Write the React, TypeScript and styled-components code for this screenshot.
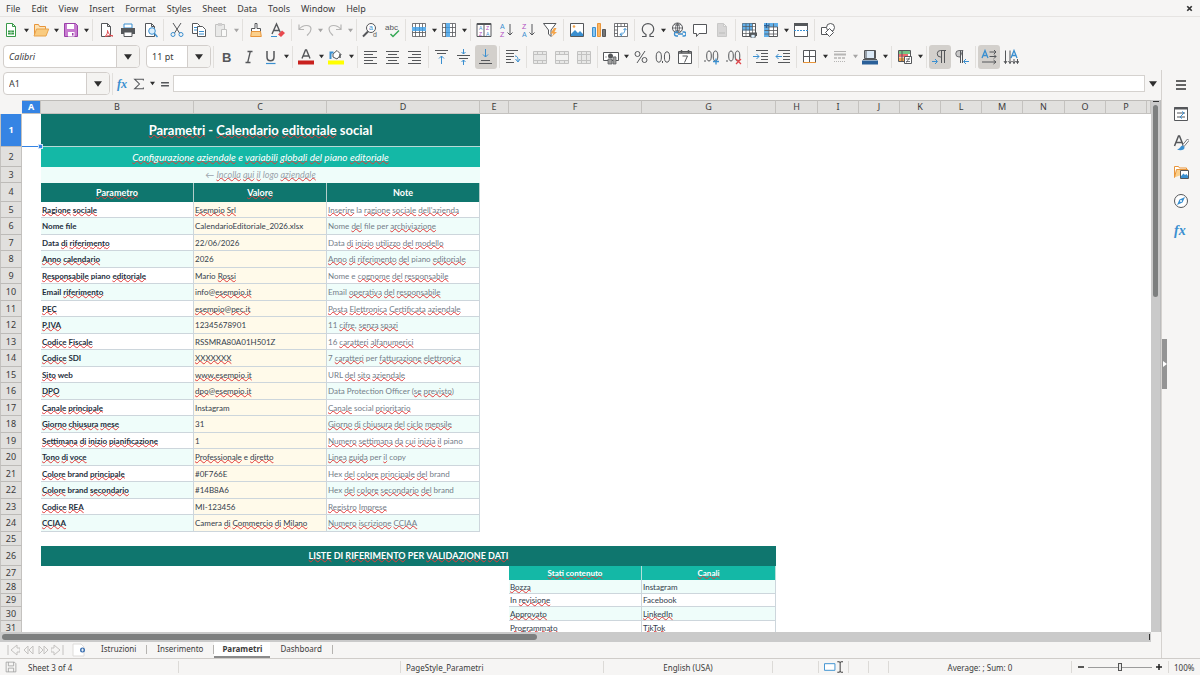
import React from "react";
import styled, { createGlobalStyle, css } from "styled-components";

const c = {
  chrome: "#f6f5f4",
  line: "#dcd9d6",
  text: "#3b3b3b",
  ink: "#55575a",
  blue: "#3a8fd0",
  teal: "#0f766e",
  tealLight: "#14b8a6",
  mint: "#effdfa",
  cream: "#fffaea",
  select: "#3584e4",
};

const uiFont = '"Noto Sans", sans-serif';
const cellFont = 'Lato, "Liberation Sans", sans-serif';

const GlobalStyle = createGlobalStyle`
  * { box-sizing: border-box; }
  html, body { margin: 0; padding: 0; }
  body { background: ${c.chrome}; font-family: ${uiFont}; font-size: 9px; color: ${c.text}; overflow: hidden; }
  button, input { font: inherit; color: inherit; margin: 0; padding: 0; border: 0; background: none; border-radius: 0; outline: none; }
`;

/* ---------- shell ---------- */

const Shell = styled.div`
  display: flex;
  flex-direction: column;
  height: 100vh;
`;

const MenuBar = styled.nav`
  display: flex;
  align-items: center;
  height: 17px;
  padding-left: 1px;
  border-bottom: 1px solid #e6e4e2;
`;

const MenuItem = styled.button`
  padding: 1px 6px 0 5px;
  line-height: 16px;
`;

const CloseButton = styled.button`
  margin-left: auto;
  width: 22px;
  height: 16px;
  display: flex;
  align-items: center;
  justify-content: center;
`;

const Toolbar = styled.div<{ $height: number }>`
  display: flex;
  align-items: center;
  height: ${(p) => p.$height}px;
`;

const Combos = styled.div`
  display: flex;
  gap: 3px;
`;

const ToolButton = styled.button<{ $on?: boolean; $off?: boolean; $slim?: boolean }>`
  display: flex;
  align-items: center;
  justify-content: center;
  flex: none;
  width: ${(p) => (p.$slim ? 16 : 22)}px;
  height: 24px;
  border-radius: 3px;
  ${(p) => p.$on && css`background: #d3d0cc;`}
  ${(p) => p.$off && css`opacity: 0.4; filter: grayscale(1);`}
`;

const CaretButton = styled(ToolButton)<{ $wide?: boolean }>`
  width: ${(p) => (p.$wide ? 10 : 8)}px;
`;

const Separator = styled.span`
  flex: none;
  width: 1px;
  height: 22px;
  margin: 0 2px;
  background: #e2e0dd;
`;

const Combo = styled.div<{ $width: number }>`
  display: flex;
  flex: none;
  width: ${(p) => p.$width}px;
  height: 23px;
  margin-left: 3px;
  border: 1px solid #d2cecb;
  border-radius: 4px;
  background: #fff;
  overflow: hidden;
`;

const ComboInput = styled.input<{ $italic?: boolean }>`
  flex: 1;
  min-width: 0;
  padding-left: 5px;
  font-style: ${(p) => (p.$italic ? "italic" : "normal")};
`;

const ComboArrow = styled.button`
  display: flex;
  align-items: center;
  justify-content: center;
  width: 23px;
  border-left: 1px solid #d2cecb;
  background: #f4f3f1;
`;

const Work = styled.div`
  display: flex;
  flex: 1;
  min-height: 0;
`;

const Main = styled.main`
  display: flex;
  flex-direction: column;
  flex: 1;
  min-width: 0;
`;

const FormulaBar = styled.div`
  display: flex;
  align-items: center;
  height: 27px;
  margin-bottom: 3px;
`;

const FormulaInput = styled.input`
  flex: 1;
  min-width: 0;
  height: 17px;
  background: #fff;
  border: 1px solid #d5d2cf;
`;

/* ---------- sheet ---------- */

const SheetRow = styled.div`
  display: flex;
  flex: 1;
  min-height: 0;
`;

const SheetView = styled.div`
  flex: 1;
  min-width: 0;
  overflow: hidden;
  background: #fff;
`;

const Grid = styled.table`
  width: 100%;
  table-layout: fixed;
  border-collapse: separate;
  border-spacing: 0;
`;

const ColHead = styled.th<{ $on?: boolean }>`
  height: 14px;
  padding: 0;
  line-height: 12px;
  font-weight: ${(p) => (p.$on ? 700 : 400)};
  color: ${(p) => (p.$on ? "#fff" : c.text)};
  background: ${(p) => (p.$on ? c.select : "#e1e0de")};
  border-top: 1px solid #bdbbb8;
  border-right: 1px solid #c4c2bf;
  border-bottom: 1px solid #c4c2bf;
`;

const Corner = styled.td`
  padding: 0;
  background: ${c.chrome};
`;

const RowHead = styled.th<{ $h: number; $on?: boolean }>`
  height: ${(p) => p.$h}px;
  padding: 0;
  line-height: 12px;
  font-weight: ${(p) => (p.$on ? 700 : 400)};
  color: ${(p) => (p.$on ? "#fff" : c.text)};
  background: ${(p) => (p.$on ? c.select : "#e1e0de")};
  border-left: 1px solid #c4c2bf;
  border-right: 1px solid #c4c2bf;
  border-bottom: 1px solid #bdbbb8;
`;

type Look =
  | "title" | "subtitle" | "hint" | "head" | "name" | "value"
  | "note" | "section" | "listHead" | "list";

const looks = {
  title: css`
    font-size: 13px; font-weight: 700; color: #fff; text-align: center;
    background: ${c.teal}; border-bottom: 1px solid #b9d9d6;
  `,
  subtitle: css`
    font-size: 10px; font-style: italic; color: #fff; text-align: center;
    background: ${c.tealLight};
  `,
  hint: css`
    font-size: 9px; font-style: italic; color: #9aa3ab; text-align: center;
    background: ${c.mint};
  `,
  head: css`
    font-size: 9px; font-weight: 700; color: #fff; text-align: center;
    background: ${c.teal}; border-right: 1px solid #b4cdca;
  `,
  name: css`font-weight: 700; color: #1f2f3d;`,
  value: css`color: #33404c;`,
  note: css`color: #747d89;`,
  section: css`
    font-size: 9px; font-weight: 700; color: #fff; text-align: center;
    background: ${c.teal};
  `,
  listHead: css`
    font-size: 8px; font-weight: 700; color: #fff; text-align: center;
    background: ${c.tealLight}; border-right: 1px solid #b4e0da;
  `,
  list: css`color: #33404c;`,
};

const Cell = styled.td<{ $look: Look; $fill?: string }>`
  padding: 0 1px;
  font-family: ${cellFont};
  font-size: 8px;
  line-height: 12px;
  white-space: nowrap;
  background: ${(p) => p.$fill || "transparent"};
  ${(p) =>
    ["name", "value", "note", "list"].includes(p.$look) &&
    css`
      border-right: 1px solid #cdd6dc;
      border-bottom: 1px solid #cdd6dc;
    `}
  ${(p) => looks[p.$look]}
`;

const ActiveCell = styled.td`
  position: relative;
  padding: 0;
  border-bottom: 1px solid ${c.select};
`;

const FillHandle = styled.span`
  position: absolute;
  right: -2px;
  bottom: -3px;
  z-index: 1;
  width: 5px;
  height: 5px;
  background: ${c.select};
  border: 1px solid #cfe2f8;
`;

const Misspelt = styled.span`
  text-decoration: underline wavy #e23b3b 1px;
  text-decoration-skip-ink: none;
  text-underline-offset: -1px;
`;

/* ---------- scroll bars ---------- */

const VScroll = styled.div`
  display: flex;
  flex-direction: column;
  align-items: center;
  width: 10px;
  background: #cacaca;
  border-right: 1px solid #bcbcbc;
`;

const VMark = styled.span`
  width: 6px;
  height: 1px;
  margin: 1px 0 3px;
  background: #333;
`;

const VThumb = styled.span`
  width: 5px;
  height: 36%;
  border-radius: 3px;
  background: #7d7f7f;
`;

const HScroll = styled.div`
  display: flex;
  align-items: center;
  justify-content: space-between;
  height: 10px;
  margin-right: 10px;
  padding: 0 1px 0 2px;
  background: #cacaca;
`;

const HThumb = styled.span`
  width: calc(47% - 5px);
  height: 6px;
  border-radius: 3px;
  background: #7d7f7f;
`;

const HMark = styled.span`
  width: 1px;
  height: 6px;
  background: #333;
`;

/* ---------- sheet tabs ---------- */

const Tabs = styled.div`
  display: flex;
  align-items: stretch;
  height: 16px;
  padding-left: 5px;
  font-size: 8px;
`;

const TabNav = styled.button`
  width: 15px;
  display: flex;
  align-items: center;
  justify-content: center;
`;

const AddTab = styled.button`
  display: flex;
  align-items: center;
  justify-content: center;
  width: 18px;
  margin: 0 3px 0 5px;
`;

const Tab = styled.button<{ $on?: boolean }>`
  padding: 0 ${(p) => (p.$on ? 8 : 10)}px;
  line-height: 14px;
  font-weight: ${(p) => (p.$on ? 700 : 400)};
  background: ${(p) => (p.$on ? "#fff" : "transparent")};
  border-bottom: 2px solid ${(p) => (p.$on ? "#8b8b8b" : "transparent")};
`;

const TabRule = styled.span`
  width: 1px;
  height: 9px;
  margin-top: 3px;
  background: #b5b3b0;
`;

/* ---------- side bar ---------- */

const Side = styled.aside`
  display: flex;
  flex: none;
  width: 39px;
  border-left: 1px solid #d5d2cf;
`;

const SideHandle = styled.button`
  align-self: center;
  display: flex;
  align-items: center;
  justify-content: center;
  width: 5px;
  height: 50px;
  background: #949494;
`;

const SideIcons = styled.div`
  display: flex;
  flex: 1;
  flex-direction: column;
  align-items: center;
  padding-right: 5px;
`;

const SideButton = styled.button`
  display: flex;
  align-items: center;
  justify-content: center;
  width: 24px;
  height: 29px;
`;

/* ---------- status bar ---------- */

const Status = styled.footer`
  display: grid;
  grid-template-columns: 23px 156fr 222fr 203fr 169fr 46px 30px 20px 20px 183fr 97px 31px;
  height: 17px;
  border-top: 1px solid #cfccc9;
  font-size: 8px;
`;

const StatusCell = styled.div<{ $align?: string; $rule?: boolean }>`
  display: flex;
  align-items: center;
  justify-content: ${(p) => p.$align || "flex-start"};
  gap: 3px;
  height: 12px;
  margin-top: 2px;
  padding: 0 5px;
  white-space: nowrap;
  border-right: 1px solid ${(p) => (p.$rule ? "#dcdad7" : "transparent")};
`;

const ZoomSlider = styled.input`
  appearance: none;
  flex: 1;
  min-width: 0;
  height: 12px;
  background: linear-gradient(#9c9c9c, #9c9c9c) center / 100% 1px no-repeat;
  &::-webkit-slider-thumb {
    appearance: none;
    width: 4px;
    height: 8px;
    border: 1px solid #555;
    background: #e8e8e8;
  }
`;

const StepButton = styled.button`
  width: 8px;
  height: 12px;
  display: flex;
  align-items: center;
  justify-content: center;
`;

/* ---------- icons ---------- */

const S = c.ink;
const B = c.blue;
const page = "M3.5 1.5h6l3 3v10h-9z M9.5 1.5v3h3";
const lines = (rows: [number, number, number][]) =>
  rows.map(([y, a, b]) => <path key={y} d={`M${a} ${y}.5H${b}`} stroke={S} />);
const svgFont = { fontFamily: '"Noto Sans", sans-serif' };
const smallFont = { fontFamily: '"Liberation Sans", sans-serif' };
const purple = "#b04bc0";
const mergeBase = (
  <>
    <path d="M1.5 2.5h13v12h-13z" fill="#d5d5d5" stroke="#777" />
    <path d="M1.5 5.5h13M1.5 11.5h13M5.5 2.5v3M10.5 2.5v3M5.5 11.5v3M10.5 11.5v3" stroke="#777" />
  </>
);
const gridLines = "M1.5 1.5h13v13h-13z M1.5 5.5h13 M1.5 10.5h13 M4.5 1.5v13 M8.5 1.5v13 M11.5 1.5v13";

const art: Record<string, React.ReactNode> = {
  new: <><path d={page} fill="#fff" stroke="#3a9a4a" /><path d="M5 8.5h6v4H5z" fill="#3a9a4a" /><path d="M5 10.500h6M8 8.500v4" stroke="#c9ecd0" strokeWidth=".7" /></>,
  open: <><path d="M1.500 13V2.500h4l1 2h6v3" fill="#fde3b5" stroke="#e8953a" /><path d="M1 14 3.500 7h12.200L13 14z" fill="#f9cb80" stroke="#e8a34b" /></>,
  save: <><path d="M1.500 1.500h11l2 2v11h-13z" fill="#c77bd0" stroke="#9a3fa8" /><path d="M4 2h7v5H4z" fill="#fff" /><path d="M5 10h6.500v4.500H5z" fill="#fff" /><path d="M9 11h1.500v2.500H9z" fill="#9a3fa8" /></>,
  pdf: <><path d={page} fill="#fff" stroke={S} /><path d="M7 14.500c2-1 3-5 2.500-6 1 4 3 5 5.500 5.500-3-1-5.500 0-8 .5z" fill="none" stroke="#e0474c" /></>,
  print: <><path d="M4 2h8v4H4z" fill="#fff" stroke={B} /><path d="M1 6h14v6H1z" fill="#55585b" /><path d="M4 10h8v4.500H4z" fill="#fff" stroke={S} /></>,
  preview: <><path d={page} fill="#fff" stroke={S} /><circle cx="10" cy="9" r="3.300" fill="#dbeefc" stroke={B} /><path d="m12.500 11.500 3 3.500" stroke={B} strokeWidth="1.500" /></>,
  cut: <><path d="m4 1 6.500 10M12 1 5.500 11" stroke={S} fill="none" /><circle cx="4" cy="12.500" r="2" fill="none" stroke={B} /><circle cx="12" cy="12.500" r="2" fill="none" stroke={B} /></>,
  copy: <><path d="M1.500 1.500h5l2 2v8h-7z" fill="#fff" stroke={S} /><path d="M6.500 4.500h5l3 3v7h-8z" fill="#fff" stroke={S} /><path d="M8 9.500h5M8 12h5M3 5.500h3M3 8h3" stroke={B} /></>,
  paste: <><path d="M2.500 2.500h9v12h-9z" fill="#d8d8d8" stroke="#777" /><path d="M5 1h4v3H5z" fill="#999" /><path d="M8.500 7.500h5v7h-5z" fill="#fff" stroke="#777" /></>,
  clone: <><path d="M7 1.500h2v5h3.500v3h-9v-3H7z" fill="#fff" stroke={S} /><path d="M3.500 9.500h9l.8 5H2.700z" fill="#fbd08c" stroke="#e8953a" /></>,
  clear: <><path d="m2 12 4.500-10 3.800 8.500M3.600 8.500H9" fill="none" stroke={S} strokeWidth="1.400" /><path d="M1 14.500h6" stroke={B} /><path d="m8 12.500 4-4 3 2.500-4 4z" fill="#e8494e" /></>,
  undo: <path d="M2 2.500v5h5M2 7.500C6 2 14 2.500 14 7c0 3-2 4.500-4 6.500" fill="none" stroke={S} strokeWidth="1.200" />,
  redo: <path d="M14 2.500v5H9M14 7.500C10 2 2 2.500 2 7c0 3 2 4.500 4 6.500" fill="none" stroke={S} strokeWidth="1.200" />,
  find: <><circle cx="9" cy="6" r="4.500" fill="#fff" stroke={S} /><path d="M6 9.500 1 14.500" stroke={S} strokeWidth="2" /><text x="7" y="8" fontSize="7" fill={B} style={smallFont}>a</text><text x="11" y="15" fontSize="7" fill={S} style={smallFont}>d</text></>,
  spell: <><text x="1" y="8" fontSize="8" fill={S} style={smallFont}>abc</text><path d="m6.500 12 2.500 2.500 6-6" fill="none" stroke="#35a854" strokeWidth="1.500" /></>,
  row: <><path d={gridLines} fill="#fff" stroke={S} strokeWidth=".8" /><path d="M1 5h14v4H1z" fill="#62b0ea" /><path d="M4.500 5v4M8.500 5v4M11.500 5v4" stroke={B} strokeWidth=".8" /></>,
  col: <><path d={gridLines} fill="#fff" stroke={S} strokeWidth=".8" /><path d="M5 1h4v14H5z" fill="#62b0ea" /><path d="M5 5.500h4M5 10.500h4" stroke={B} strokeWidth=".8" /></>,
  sort: <><path d="M1 1.500h14v13H1z M8 1.500v13" fill="#fff" stroke={S} /><path d="M1 2h14" stroke={S} strokeWidth="2" /><text x="3" y="8" fontSize="5" fill={B} style={smallFont}>A</text><text x="10" y="8" fontSize="5" fill={purple} style={smallFont}>Z</text><text x="3" y="14" fontSize="5" fill={purple} style={smallFont}>Z</text><text x="10" y="14" fontSize="5" fill={B} style={smallFont}>A</text></>,
  asc: <><text x="2" y="7" fontSize="7" fill={B} style={smallFont}>A</text><text x="2" y="15" fontSize="7" fill={purple} style={smallFont}>Z</text><path d="M12 2v11M9.500 10.500 12 13l2.500-2.500" fill="none" stroke={S} /></>,
  desc: <><text x="2" y="7" fontSize="7" fill={purple} style={smallFont}>Z</text><text x="2" y="15" fontSize="7" fill={B} style={smallFont}>A</text><path d="M12 2v11M9.500 10.500 12 13l2.500-2.500" fill="none" stroke={S} /></>,
  filter: <><path d="M1.500 1.500h12.500L9 8v6.500L6.500 12V8z" fill="#fff" stroke={S} /><path d="m12 6-3.500 5.500h3L9.500 15l5.500-5h-2.500l2-4z" fill="#f5a54a" /></>,
  image: <><path d="M1.500 1.500h13v13h-13z" fill="#fff" stroke={S} /><path d="M2 14v-2l4-4 3 3 2-2 3 3v2z" fill={B} /><circle cx="5" cy="4.500" r="1.300" fill="#f5a54a" /></>,
  chart: <><path d="M1.500 5.500h3v9h-3z" fill="#8cc6f0" stroke={B} /><path d="M6.500 1.500h3v13h-3z" fill="#fbb765" stroke="#e8953a" /><path d="M11.500 7.500h3v7h-3z" fill="#777" stroke={S} /></>,
  pivot: <><path d="M1.500 1.500h13v13h-13z M1.500 4.500h13 M4.500 1.500v13 M8 1.500v3 M11.500 1.500v3 M1.500 8h3 M1.500 11.500h3" fill="#fff" stroke={S} strokeWidth=".8" /><path d="M7 12.500c4 0 5-3 5-6M7 12.500l2-2M7 12.500l2 1.500M12 6.500 10.500 8M12 6.500 13.500 8" fill="none" stroke={B} /></>,
  omega: <path d="M2 14.500h4v-2C3.500 11 2.300 9 2.300 7a5.700 5.400 0 0 1 11.400 0c0 2-1.200 4-3.700 5.500v2h4" fill="none" stroke={S} strokeWidth="1.200" />,
  link: <><circle cx="7.500" cy="6" r="5" fill="#fff" stroke={S} /><path d="M2.500 6h10M7.500 1v10M4 2.500q3.500 2 7 0M4 9.500q3.500-2 7 0M7.500 1q-4 5 0 10M7.500 1q4 5 0 10" fill="none" stroke={S} strokeWidth=".8" /><path d="M8 10H6.500a2 2 0 0 0 0 4H8M12.500 10H14a2 2 0 0 1 0 4h-1.500M8 12h5" fill="none" stroke={B} strokeWidth="1.300" /></>,
  comment: <path d="M1.500 2.500h13v9H7l-2.500 3v-3h-3z" fill="#fff" stroke={S} />,
  header: <><path d={page} fill="#aaa" stroke="#888" /><path d="M5 11h6" stroke="#666" /></>,
  printArea: <><path d="M1.500 1.500h13v13h-13z" fill="#fff" stroke={S} /><path d="M1.500 1.500h10v7h-10z" fill="#62b0ea" /><path d="M1.500 4.500h13M1.500 8h13M1.500 11.500h13M5 1.500v13M8.500 1.500v13M11.500 1.500v13" stroke={S} strokeWidth=".7" /><path d="M8 10.500h8v3.500H8z" fill="#55585b" /><path d="M10 12.500h4V16h-4z" fill="#dbeefc" stroke={S} strokeWidth=".7" /></>,
  freeze: <><path d="M1.500 1.500h13v13h-13z" fill="#fff" stroke={S} /><path d="M1 1h14v4H6v10H1z" fill="#62b0ea" /><path d="M1.500 5h13M1.500 8.500h13M1.500 12h13M6 1.500v13M10.500 1.500v13" stroke={S} strokeWidth=".8" /><path d="M1 3.500h5M3.500 1v5" stroke="#2a6099" /></>,
  split: <><path d="M1.500 2.500h13v12h-13z" fill="#fff" stroke={S} /><path d="M1 1h14v3H1z" fill="#55585b" /><path d="M1 8.500h14" stroke={B} strokeDasharray="2 1" /></>,
  shapes: <><path d="M1.500 5.500h7v7h-7z" fill="#fff" stroke={S} /><circle cx="10.500" cy="5.500" r="4" fill="#fff" stroke={S} /><path d="m9.500 6.500 4 4-4 4-4-4z" fill="#fff" stroke={S} /></>,

  bold: <text x="3" y="13" fontSize="13" fontWeight="700" fill={S} style={smallFont}>B</text>,
  italic: <path d="M6.500 2.500h5M4.500 13.500h5M9.300 2.500l-2.600 11" fill="none" stroke={S} strokeWidth="1.300" />,
  underline: <><path d="M4 2v6c0 5 7 5 7 0V2" fill="none" stroke={S} strokeWidth="1.500" /><path d="M3 14.500h9.500" stroke={B} strokeWidth="1.200" /></>,
  color: <><path d="M4 9.500 7.500 1h1L12 9.500M5.300 7h5.400" fill="none" stroke={S} strokeWidth="1.400" /><path d="M0 11.500h16v4H0z" fill="#c9211e" /></>,
  highlight: <><path d="m5 5 4-3.500 4 4L9 10 5 8z" fill="#fff" stroke={S} /><path d="M2.500 10V3.500h3" fill="none" stroke={B} strokeWidth="2" /><path d="M12 5v4" stroke={S} strokeWidth="1.500" /><path d="M0 11.500h16v4H0z" fill="#ffff00" /></>,
  left: <>{lines([[2, 1, 14], [5, 1, 10], [8, 1, 14], [11, 1, 10], [14, 1, 14]])}</>,
  center: <>{lines([[2, 1, 14], [5, 3, 12], [8, 1, 14], [11, 3, 12], [14, 1, 14]])}</>,
  right: <>{lines([[2, 1, 14], [5, 5, 14], [8, 1, 14], [11, 5, 14], [14, 1, 14]])}</>,
  top: <>{lines([[1, 1, 14], [4, 3, 12]])}<path d="M7.500 15V7M5 9.500 7.500 7 10 9.500" fill="none" stroke={B} /></>,
  middle: <>{lines([[6, 1, 14], [9, 3, 12]])}<path d="M7.500 0v5M5.500 3l2 2 2-2M7.500 16v-5M5.500 13l2-2 2 2" fill="none" stroke={B} /></>,
  bottom: <>{lines([[11, 3, 12], [14, 1, 14]])}<path d="M7.500 0v8M5 5.500 7.500 8 10 5.500" fill="none" stroke={B} /></>,
  wrap: <>{lines([[1, 1, 13], [4, 1, 9], [7, 1, 9], [10, 1, 6], [13, 1, 9]])}<path d="M10 7c3 0 3 3 3 5M10.500 10l2.500 3 2-3" fill="none" stroke={B} /></>,
  merge1: mergeBase,
  merge2: <>{mergeBase}<path d="M2 6h12v5H2z" fill="#eee" /></>,
  merge3: <>{mergeBase}<path d="M5.500 6v5M10.500 6v5" stroke="#777" /></>,
  currency: <><path d="M.5 3.500h15v8H.5z" fill="#fff" stroke={S} /><circle cx="7.500" cy="7" r="2.500" fill={S} /><path d="M3 7.500v1M12 7.500v1" stroke={S} /><path d="M5 10h4v5H5zM10 8h3v7h-3z" fill="#a0a0a0" stroke={S} strokeWidth=".7" /></>,
  percent: <><circle cx="4.500" cy="5" r="2.500" fill="none" stroke={S} /><circle cx="11.500" cy="11" r="2.500" fill="none" stroke={S} /><path d="M12 2 4 14" stroke={S} /></>,
  number: <><ellipse cx="3.800" cy="8" rx="2.600" ry="5.200" fill="none" stroke={S} /><ellipse cx="12" cy="8" rx="2.600" ry="5.200" fill="none" stroke={S} /><path d="M7.500 12v2" stroke={S} /></>,
  date: <><path d="M1.500 2.500h13v12h-13z" fill="#fff" stroke={S} /><path d="M1 4h14M4.500 1v3M11.500 1v3" stroke={S} strokeWidth="1.500" /><path d="M5.500 7h5l-3 6.500" fill="none" stroke={S} /></>,
  addDec: <><path d="M1 11v2" stroke={S} /><ellipse cx="5" cy="7" rx="2.300" ry="5" fill="none" stroke={S} /><ellipse cx="11.500" cy="7" rx="2.300" ry="5" fill="none" stroke={S} /><path d="M9 12.500h6M12 9.500v6" stroke={B} strokeWidth="1.300" /></>,
  delDec: <><path d="M1 11v2" stroke={S} /><ellipse cx="5" cy="7" rx="2.300" ry="5" fill="none" stroke={S} /><ellipse cx="11.500" cy="7" rx="2.300" ry="5" fill="none" stroke={S} /><path d="m10 10 5 5M15 10l-5 5" stroke="#e0474c" strokeWidth="1.300" /></>,
  indent: <>{lines([[1, 3, 15], [4, 8, 15], [7, 8, 15], [10, 8, 15], [13, 3, 15]])}<path d="M0 7.500h6M3.500 5 6 7.500 3.500 10" fill="none" stroke={B} /></>,
  outdent: <>{lines([[1, 3, 15], [4, 8, 15], [7, 8, 15], [10, 8, 15], [13, 3, 15]])}<path d="M7 7.500H1M3.500 5 1 7.500 3.500 10" fill="none" stroke={B} /></>,
  borders: <><path d="M1.500 1.500h12v12h-12z M7.500 1.500v12 M1.500 7.500h12" fill="#fff" stroke={S} /><path d="M1 13.500h13" stroke="#e8953a" /></>,
  lineStyle: <><path d="M2 2.500h12" stroke={S} /><path d="M2 5.500h12" stroke={S} strokeWidth="2" /><path d="M2 9h12" stroke={S} strokeWidth="1.500" strokeDasharray="3 1" /><path d="M2 12.500h12" stroke={S} strokeDasharray="1 1" /></>,
  borderColor: <><path d="M2.500 1.500h11v8h-11z" fill="#dbe9f7" stroke={S} /><path d="M4 1.500v9M12.500 1.500v9M1 10.500h14" stroke={S} /><path d="M0 11.500h16v4H0z" fill="#2a6099" /></>,
  cond: <><path d="M1.500 1.500h12v11h-12z" fill="#fff" stroke={S} /><path d="M2 2h11v3H2z" fill="#74c686" /><path d="M2 5h9v3H2z" fill="#ee6a6e" /><path d="M2 8.500h5v3.500H2z" fill="#f5a54a" /><path d="M5 2v10" stroke={S} /><path d="M7.500 7.500h7v7h-7z" fill="#fff" stroke={S} /><path d="M9 10h4M9 12.500h4M12.500 8.500l-3 5" stroke={S} strokeWidth=".8" /></>,
  ltr: <><path d="M14 1.500H8.500a3.200 3.200 0 0 0 0 6.500H9M9.500 1.500V14M12.500 1.500V14" fill="none" stroke={S} /><path d="M0 12.500h5M3 10l2.500 2.500L3 15" fill="none" stroke={B} /></>,
  rtl: <><path d="M9 1.500H5a3 3 0 0 0 0 6.500h1z" fill="#c9c9c9" stroke={S} strokeWidth=".8" /><path d="M6.500 1.500V14M8.500 1.500V14" stroke={S} /><path d="M15 12.500h-5M12 10l-2.500 2.500L12 15" fill="none" stroke={B} /></>,
  horiz: <><path d="m1 9 3-7.500L7 9M2 6.500h4" fill="none" stroke={B} strokeWidth="1.300" /><path d="M8.500 3H15M13 1l2 2-2 2M8.500 7.500H15M13 5.500l2 2-2 2M1 13h14M12.500 11l2.500 2-2.500 2" fill="none" stroke={S} /></>,
  vert: <><path d="m8 9 3-7.500L14 9M9 6.500h4" fill="none" stroke={B} strokeWidth="1.300" /><path d="M2.500 1.500v13M1 12l1.500 2.500L4 12M7 1.500v13M5.500 12 7 14.500 8.500 12M11 10v4.500M9.500 12l1.500 2.500 1.500-2.500M14.500 10v4.500M13 12l1.500 2.500L16 12" fill="none" stroke={S} /></>,

  fx: <text x="1" y="13" fontSize="14" fontStyle="italic" fontWeight="700" fill={B} style={{ fontFamily: '"Liberation Serif", serif' }}>fx</text>,
  sigma: <path d="M13 4V2.500H3L8.500 8 3 13.500h10V12" fill="none" stroke={S} strokeWidth="1.200" />,
  equals: <path d="M3.500 6.500h9M3.500 10h9" stroke={S} strokeWidth="1.800" />,
  menu: <path d="M3 4h10M3 8h10M3 12h10" stroke="#333" strokeWidth="1.500" />,
  props: <><path d="M1.500 1.500h13v13h-13z" fill="#fff" stroke={S} /><path d="M1 2.500h14" stroke={S} strokeWidth="2" /><path d="M4 7h8M4 11h8" stroke={S} /><path d="m9 5.500 2 1.500-4 4 2 1.500" fill="none" stroke={B} /></>,
  style: <><path d="m1.500 11 4-10h1l4 10M3 7.500h6" fill="none" stroke={S} strokeWidth="1.500" /><path d="m14.500 4-5 6 1.500 1.500 5-6z" fill="#fff" stroke={S} strokeWidth=".8" /><path d="M10 10.500c-3 0-2 3-6 4 3 1.500 8 1 7.500-2.500z" fill={B} /></>,
  gallery: <><path d="M1.500 13.500v-11h4l1 1.500h7v3" fill="#fff" stroke="#e8953a" /><path d="m1.500 13.500 2-8h11v3" fill="#fbd08c" stroke="#e8953a" /><path d="M7.500 6.500h8v8h-8z" fill="#fff" stroke={S} /><path d="M8 14v-2l2.500-2.500L12 11l1.500-1 1.500 2v2z" fill={B} /></>,
  nav: <><circle cx="8" cy="8" r="6.500" fill="#fff" stroke={S} /><path d="m12 4-2.500 5.500L4 12l2.500-5.500z" fill={B} /><circle cx="8" cy="8" r="1" fill="#fff" /></>,
  disk: <><path d="M1.500 1.500h11l2 2v11h-13z M4.500 1.500v5h7v-5 M4.500 14.500v-5h7v5" fill="none" stroke="#999" /></>,
  x: <path d="m4 4 8 8M12 4l-8 8" stroke="#333" strokeWidth="3" />,
};

const Icon = ({ name, size = 16 }: { name: string; size?: number }) => (
  <svg width={size} height={size} viewBox="0 0 16 16" aria-hidden="true">
    {art[name]}
  </svg>
);

const Arrow = ({ size = 5 }: { size?: number }) => (
  <svg width={size} height={size} viewBox="0 0 6 6" aria-hidden="true">
    <path d="M0 1h6L3 5z" fill="#2e2e2e" />
  </svg>
);

/* ---------- data ---------- */

/* A trailing "+" gives a tool its drop-down arrow, "*" presses it in, "-" disables it. */
const standardTools =
  "new+ open+ save+ | pdf print preview | cut copy paste-+ | clone clear | undo-+ redo-+ | find spell | row+ col+ | sort asc desc filter | image chart pivot | omega+ link comment header- | printArea freeze+ split | shapes";
const formatTools =
  "bold italic underline+ | color+ highlight+ | left center right | top middle bottom* | wrap | merge1- merge2- merge3- | currency+ percent number date | addDec delDec | indent outdent | borders+ lineStyle-+ borderColor+ | cond+ | ltr* rtl | horiz* vert";

const menus = ["File", "Edit", "View", "Insert", "Format", "Styles", "Sheet", "Data", "Tools", "Window", "Help"];

/* Words in braces carry the spell-check wave. */
const params: [string, string, string][] = [
  ["{Ragione} {sociale}", "{Esempio} {Srl}", "{Inserire} la {ragione} {sociale} {dell'azienda}"],
  ["Nome file", "CalendarioEditoriale_2026.xlsx", "Nome {del} file per {archiviazione}"],
  ["Data {di} {riferimento}", "22/06/2026", "Data {di} {inizio} {utilizzo} {del} {modello}"],
  ["{Anno} {calendario}", "2026", "{Anno} {di} {riferimento} {del} piano {editoriale}"],
  ["{Responsabile} piano {editoriale}", "Mario {Rossi}", "Nome e {cognome} {del} {responsabile}"],
  ["Email {riferimento}", "info@{esempio.it}", "Email {operativa} {del} {responsabile}"],
  ["{PEC}", "{esempio}@{pec.it}", "{Posta} {Elettronica} {Certificata} {aziendale}"],
  ["{P.IVA}", "12345678901", "11 {cifre}, {senza} {spazi}"],
  ["{Codice} {Fiscale}", "RSSMRA80A01H501Z", "16 {caratteri} {alfanumerici}"],
  ["{Codice} SDI", "{XXXXXXX}", "7 {caratteri} per {fatturazione} {elettronica}"],
  ["{Sito} web", "{www.esempio.it}", "URL {del} {sito} {aziendale}"],
  ["{DPO}", "{dpo}@{esempio.it}", "Data Protection Officer ({se} {previsto})"],
  ["{Canale} {principale}", "Instagram", "{Canale} social {prioritario}"],
  ["{Giorno} {chiusura} {mese}", "31", "{Giorno} {di} {chiusura} {del} {ciclo} {mensile}"],
  ["{Settimana} {di} {inizio} {pianificazione}", "1", "{Numero} {settimana} {da} {cui} {inizia} {il} piano"],
  ["{Tono} {di} {voce}", "{Professionale} e {diretto}", "{Linea} {guida} per {il} copy"],
  ["{Colore} brand {principale}", "#0F766E", "Hex {del} {colore} {principale} {del} brand"],
  ["{Colore} brand {secondario}", "#14B8A6", "Hex {del} {colore} {secondario} {del} brand"],
  ["{Codice} {REA}", "MI-123456", "{Registro} {Imprese}"],
  ["{CCIAA}", "Camera {di} {Commercio} {di} {Milano}", "{Numero} {iscrizione} {CCIAA}"],
];

const lists: [string, string][] = [
  ["{Bozza}", "Instagram"],
  ["In {revisione}", "Facebook"],
  ["{Approvato}", "{LinkedIn}"],
  ["{Programmato}", "{TikTok}"],
];

const colWidths = [22, 19, 153, 133, 153, 29, 133, 134, 42, 41, 41, 41, 41, 41, 42, 41, 41];
const colNames = "ABCDEFGHIJKLMNOP".split("");

/* ---------- pieces ---------- */

const Spelled = ({ text }: { text: string }) => (
  <>
    {text.split(/[{}]/).map((part, i) => (i % 2 ? <Misspelt key={i}>{part}</Misspelt> : part))}
  </>
);

const Tools = ({ spec }: { spec: string }) => (
  <>
    {spec.split(" ").map((item, i) => {
      if (item === "|") return <Separator key={i} />;
      const name = item.replace(/[-+*]/g, "");
      const off = item.includes("-");
      return (
        <React.Fragment key={i}>
          <ToolButton $on={item.includes("*")} $off={off} disabled={off} aria-label={name}>
            <Icon name={name} />
          </ToolButton>
          {item.includes("+") && (
            <CaretButton $off={off} disabled={off} aria-label={`${name} options`}>
              <Arrow />
            </CaretButton>
          )}
        </React.Fragment>
      );
    })}
  </>
);

const ComboBox = ({ label, value, width, italic }: { label: string; value: string; width: number; italic?: boolean }) => (
  <Combo $width={width}>
    <ComboInput aria-label={label} defaultValue={value} $italic={italic} />
    <ComboArrow aria-label={`${label} list`}>
      <Arrow size={8} />
    </ComboArrow>
  </Combo>
);

const Sheet = () => (
  <Grid>
    <colgroup>
      {colWidths.map((w, i) => <col key={i} style={{ width: w }} />)}
      <col />
    </colgroup>
    <thead>
      <tr>
        <Corner />
        {colNames.map((n) => <ColHead key={n} scope="col" $on={n === "A"}>{n}</ColHead>)}
        <ColHead />
      </tr>
    </thead>
    <tbody>
      <tr>
        <RowHead $h={33} $on>1</RowHead>
        <ActiveCell><FillHandle /></ActiveCell>
        <Cell $look="title" colSpan={3}><Spelled text="{Parametri} - {Calendario} {editoriale} social" /></Cell>
      </tr>
      <tr>
        <RowHead $h={20}>2</RowHead>
        <td />
        <Cell $look="subtitle" colSpan={3}>
          <Spelled text="{Configurazione} {aziendale} e {variabili} {globali} {del} piano {editoriale}" />
        </Cell>
      </tr>
      <tr>
        <RowHead $h={16}>3</RowHead>
        <td />
        <Cell $look="hint" colSpan={3}><Spelled text="← {Incolla} {qui} {il} logo {aziendale}" /></Cell>
      </tr>
      <tr>
        <RowHead $h={19}>4</RowHead>
        <td />
        <Cell $look="head"><Spelled text="{Parametro}" /></Cell>
        <Cell $look="head"><Spelled text="{Valore}" /></Cell>
        <Cell $look="head">Note</Cell>
      </tr>
      {params.map(([name, value, note], i) => {
        const fill = i % 2 ? c.mint : "#fff";
        return (
          <tr key={name}>
            <RowHead $h={i % 2 ? 17 : 16}>{i + 5}</RowHead>
            <td />
            <Cell $look="name" $fill={fill}><Spelled text={name} /></Cell>
            <Cell $look="value" $fill={c.cream}><Spelled text={value} /></Cell>
            <Cell $look="note" $fill={fill}><Spelled text={note} /></Cell>
          </tr>
        );
      })}
      <tr><RowHead $h={14}>25</RowHead></tr>
      <tr>
        <RowHead $h={20}>26</RowHead>
        <td />
        <Cell $look="section" colSpan={6}>
          <Spelled text="{LISTE} DI {RIFERIMENTO} PER {VALIDAZIONE} {DATI}" />
        </Cell>
      </tr>
      <tr>
        <RowHead $h={14}>27</RowHead>
        <td colSpan={5} />
        <Cell $look="listHead"><Spelled text="{Stati} {contenuto}" /></Cell>
        <Cell $look="listHead"><Spelled text="{Canali}" /></Cell>
      </tr>
      {lists.map(([state, channel], i) => {
        const fill = i % 2 ? "#fff" : c.mint;
        return (
          <tr key={state}>
            <RowHead $h={i === 1 ? 13 : 14}>{i + 28}</RowHead>
            <td colSpan={5} />
            <Cell $look="list" $fill={fill}><Spelled text={state} /></Cell>
            <Cell $look="list" $fill={fill}><Spelled text={channel} /></Cell>
          </tr>
        );
      })}
    </tbody>
  </Grid>
);

const navArt = [
  "M2 1v10M11 1 5 6l6 5V8h3V4h-3z",
  "M7 2 3 6l4 4zM12 2 8 6l4 4z",
  "M3 2l4 4-4 4zM8 2l4 4-4 4z",
  "M12 1v10M3 1l6 5-6 5V8H0V4h3z",
];

const App = () => (
  <>
    <GlobalStyle />
    <Shell>
      <MenuBar aria-label="Main menu">
        {menus.map((m) => <MenuItem key={m}>{m}</MenuItem>)}
        <CloseButton aria-label="Close"><Icon name="x" size={9} /></CloseButton>
      </MenuBar>
      <Toolbar $height={26}><Tools spec={standardTools} /></Toolbar>
      <Toolbar $height={27}>
        <Combos>
          <ComboBox label="Font name" value="Calibri" width={137} italic />
          <ComboBox label="Font size" value="11 pt" width={65} />
        </Combos>
        <Separator />
        <Tools spec={formatTools} />
      </Toolbar>
      <Work>
        <Main>
          <FormulaBar>
            <ComboBox label="Name box" value="A1" width={107} />
            <Separator />
            <ToolButton $slim aria-label="Function wizard"><Icon name="fx" size={14} /></ToolButton>
            <ToolButton $slim aria-label="Sum"><Icon name="sigma" size={14} /></ToolButton>
            <CaretButton $wide aria-label="Sum options"><Arrow /></CaretButton>
            <ToolButton $slim aria-label="Formula"><Icon name="equals" size={14} /></ToolButton>
            <FormulaInput aria-label="Formula input" />
            <ToolButton $slim aria-label="Expand formula bar"><Arrow size={8} /></ToolButton>
          </FormulaBar>
          <SheetRow>
            <SheetView><Sheet /></SheetView>
            <VScroll><VMark /><VThumb /></VScroll>
          </SheetRow>
          <HScroll><HThumb /><HMark /></HScroll>
          <Tabs>
            {navArt.map((d) => (
              <TabNav key={d} disabled aria-label="Scroll sheets">
                <svg width="14" height="12" viewBox="0 0 14 12" aria-hidden="true">
                  <path d={d} fill="none" stroke="#c4c2c0" />
                </svg>
              </TabNav>
            ))}
            <AddTab aria-label="Add sheet">
              <svg width="14" height="14" viewBox="0 0 14 14" aria-hidden="true">
                <path d="M1 1h8l3 3v9H1z" fill="#fff" stroke="#dedcda" />
                <circle cx="10.500" cy="7" r="2.500" fill="#3a6fb0" />
                <path d="M9 7h3M10.500 5.500v3" stroke="#fff" strokeWidth=".8" />
              </svg>
            </AddTab>
            <Tab>Istruzioni</Tab><TabRule />
            <Tab>Inserimento</Tab><TabRule />
            <Tab $on>Parametri</Tab>
            <Tab>Dashboard</Tab><TabRule />
          </Tabs>
        </Main>
        <Side>
          <SideHandle aria-label="Hide sidebar">
            <svg width="4" height="6" viewBox="0 0 4 6" aria-hidden="true"><path d="M0 0l4 3-4 3z" fill="#fff" /></svg>
          </SideHandle>
          <SideIcons>
            {["menu", "props", "style", "gallery", "nav", "fx"].map((n) => (
              <SideButton key={n} aria-label={n}><Icon name={n} /></SideButton>
            ))}
          </SideIcons>
        </Side>
      </Work>
      <Status>
        <StatusCell><Icon name="disk" size={12} /></StatusCell>
        <StatusCell $rule>Sheet 3 of 4</StatusCell>
        <StatusCell $rule />
        <StatusCell $rule>PageStyle_Parametri</StatusCell>
        <StatusCell $rule $align="center">English (USA)</StatusCell>
        <StatusCell $rule />
        <StatusCell $rule>
          <svg width="20" height="12" viewBox="0 0 20 12" aria-hidden="true">
            <path d="M.5 2.500h11v7H.5z" fill="#fff" stroke={c.blue} />
            <path d="M14 .5h2q1 0 1 1v9q0 1-1 1h-2M20 .5h-2q-1 0-1 1M20 11.500h-2q-1 0-1-1" fill="none" stroke="#333" />
          </svg>
        </StatusCell>
        <StatusCell $rule />
        <StatusCell $rule />
        <StatusCell $rule $align="center">Average: ; Sum: 0</StatusCell>
        <StatusCell $rule>
          <StepButton aria-label="Zoom out"><svg width="8" height="8" viewBox="0 0 8 8"><path d="M1 4h6" stroke="#222" strokeWidth="1.500" /></svg></StepButton>
          <ZoomSlider type="range" aria-label="Zoom" defaultValue={50} />
          <StepButton aria-label="Zoom in"><svg width="8" height="8" viewBox="0 0 8 8"><path d="M1 4h6M4 1v6" stroke="#222" strokeWidth="1.500" /></svg></StepButton>
        </StatusCell>
        <StatusCell>100%</StatusCell>
      </Status>
    </Shell>
  </>
);

export default App;
